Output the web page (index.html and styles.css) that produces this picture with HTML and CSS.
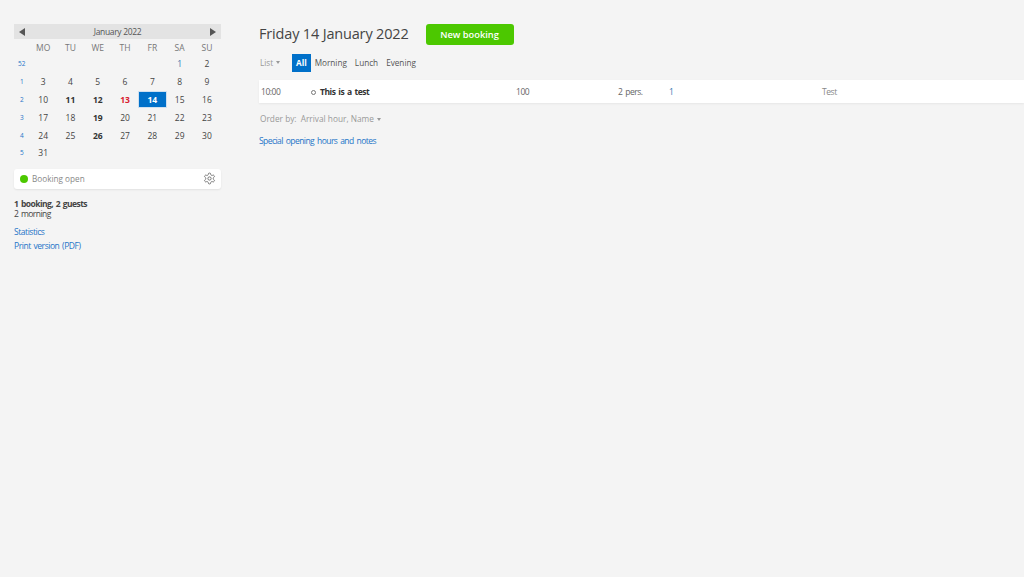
FILE: index.html
```html
<!DOCTYPE html>
<html lang="en">
<head>
    <meta charset="UTF-8">
    <title>Bookings</title>
    <link rel="stylesheet" href="styles.css">
</head>
<body>
    <div class="sidebar">
        <div class="cal-head">
            <span class="arrow-left"></span>
            <span>January 2022</span>
            <span class="arrow-right"></span>
        </div>
        <div class="cal-grid">
            <span></span><span class="dow">MO</span><span class="dow">TU</span><span class="dow">WE</span><span class="dow">TH</span><span class="dow">FR</span><span class="dow">SA</span><span class="dow">SU</span>

            <a class="wk">52</a><span></span><span></span><span></span><span></span><span></span><span class="blue">1</span><span>2</span>
            <a class="wk">1</a><span>3</span><span>4</span><span>5</span><span>6</span><span>7</span><span>8</span><span>9</span>
            <a class="wk">2</a><span>10</span><span class="bold">11</span><span class="bold">12</span><span class="bold red">13</span><span class="today">14</span><span>15</span><span>16</span>
            <a class="wk">3</a><span>17</span><span>18</span><span class="bold">19</span><span>20</span><span>21</span><span>22</span><span>23</span>
            <a class="wk">4</a><span>24</span><span>25</span><span class="bold">26</span><span>27</span><span>28</span><span>29</span><span>30</span>
            <a class="wk">5</a><span>31</span>
        </div>

        <div class="status-box">
            <span class="dot"></span>
            <span class="status-text">Booking open</span>
            <svg class="gear" width="13" height="13" viewBox="0 0 24 24" fill="none" stroke="#666" stroke-width="1.6" stroke-linejoin="round">
                <circle cx="12" cy="12" r="3"/>
                <path d="M12.22 2h-.44a2 2 0 0 0-2 2v.18a2 2 0 0 1-1 1.73l-.43.25a2 2 0 0 1-2 0l-.15-.08a2 2 0 0 0-2.73.73l-.22.38a2 2 0 0 0 .73 2.73l.15.1a2 2 0 0 1 1 1.72v.51a2 2 0 0 1-1 1.74l-.15.09a2 2 0 0 0-.73 2.73l.22.38a2 2 0 0 0 2.73.73l.15-.08a2 2 0 0 1 2 0l.43.25a2 2 0 0 1 1 1.73V20a2 2 0 0 0 2 2h.44a2 2 0 0 0 2-2v-.18a2 2 0 0 1 1-1.73l.43-.25a2 2 0 0 1 2 0l.15.08a2 2 0 0 0 2.73-.73l.22-.39a2 2 0 0 0-.73-2.73l-.15-.08a2 2 0 0 1-1-1.74v-.5a2 2 0 0 1 1-1.74l.15-.09a2 2 0 0 0 .73-2.73l-.22-.38a2 2 0 0 0-2.73-.73l-.15.08a2 2 0 0 1-2 0l-.43-.25a2 2 0 0 1-1-1.73V4a2 2 0 0 0-2-2z"/>
            </svg>
        </div>

        <p class="summary"><b>1 booking, 2 guests</b><br>2 morning</p>
        <a class="side-link first">Statistics</a>
        <a class="side-link">Print version (PDF)</a>
    </div>

    <div class="main">
        <div class="title-row">
            <h1>Friday 14 January 2022</h1>
            <button class="new-btn">New booking</button>
        </div>
        <div class="tabs">
            <span class="list-menu">List <i class="caret"></i></span>
            <span class="tab active">All</span>
            <span class="tab">Morning</span>
            <span class="tab">Lunch</span>
            <span class="tab">Evening</span>
        </div>
        <div class="booking-row">
            <span class="col-time">10:00</span>
            <span class="col-name"><i class="ring"></i><b>This is a test</b></span>
            <span class="col-num">100</span>
            <span class="col-pers">2 pers.</span>
            <span class="col-one">1</span>
            <span class="col-note">Test</span>
        </div>
        <div class="order">Order by: <span class="order-val">Arrival hour, Name <i class="caret"></i></span></div>
        <a class="special">Special opening hours and notes</a>
    </div>
</body>
</html>
```

FILE: styles.css
```css
* {
    margin: 0;
    padding: 0;
    box-sizing: border-box;
}

body {
    background-color: #f4f4f4;
    font-family: "Open Sans", sans-serif;
    font-size: 8.2px;
    color: #333;
    display: flex;
    height: 577px;
    overflow: hidden;
}

a {
    color: #1f74c8;
}

/* Sidebar */
.sidebar {
    width: 207px;
    margin: 24px 0 0 14px;
    flex-shrink: 0;
}

.cal-head {
    height: 15px;
    background: #e3e3e3;
    display: flex;
    align-items: center;
    justify-content: space-between;
    padding: 0 5px;
    color: #555;
    font-size: 8.5px;
    letter-spacing: -0.33px;
}

.arrow-left,
.arrow-right {
    width: 0;
    height: 0;
    border-top: 4px solid transparent;
    border-bottom: 4px solid transparent;
}

.arrow-left {
    border-right: 6px solid #555;
}

.arrow-right {
    border-left: 6px solid #555;
}

.cal-grid {
    display: grid;
    grid-template-columns: 15.5px repeat(7, 27.3px);
    grid-template-rows: 15px;
    grid-auto-rows: 17.8px;
    justify-items: center;
    align-items: center;
    margin-top: 1px;
    font-size: 8.5px;
    color: #444;
}

.cal-grid > span {
    width: 100%;
    height: 100%;
    display: flex;
    align-items: center;
    justify-content: center;
}

.cal-grid .dow {
    color: #777;
}

.cal-grid .wk {
    font-size: 6.5px;
    justify-self: center;
}

.cal-grid .blue {
    color: #3a7ab0;
}

.cal-grid .bold {
    font-weight: 700;
    color: #333;
}

.cal-grid .red {
    color: #d8202f;
}

.cal-grid > .today {
    width: 29px;
    background: #0070c9;
    color: #fff;
    font-weight: 700;
    border: 1px solid #cfe0f0;
}

.status-box {
    height: 20px;
    margin-top: 7px;
    background: #fff;
    border-radius: 3px;
    box-shadow: 0 1px 2px rgba(0, 0, 0, 0.08);
    display: flex;
    align-items: center;
    padding: 0 5px 0 6px;
}

.dot {
    width: 8px;
    height: 8px;
    border-radius: 50%;
    background: #4cc800;
    margin-right: 4px;
}

.status-text {
    color: #888;
    flex: 1;
}

.summary {
    margin-top: 10px;
    font-size: 8.5px;
    letter-spacing: -0.55px;
    word-spacing: 1px;
    line-height: 10px;
    color: #444;
}

.side-link {
    display: block;
    margin-top: 3px;
    font-size: 8.5px;
    letter-spacing: -0.45px;
    word-spacing: 1px;
    line-height: 11px;
}

.side-link.first {
    margin-top: 7px;
}

/* Main */
.main {
    flex: 1;
    margin: 24px 0 0 38px;
    min-width: 0;
}

.title-row {
    display: flex;
    align-items: center;
    height: 21px;
}

h1 {
    font-size: 14.5px;
    letter-spacing: -0.17px;
    font-weight: 400;
    color: #444;
    margin-bottom: 3px;
}

.new-btn {
    margin-left: 17px;
    width: 88px;
    height: 21px;
    background: #4cc800;
    border: none;
    border-radius: 3px;
    color: #fff;
    font-family: inherit;
    font-size: 9.3px;
    font-weight: 600;
}

.tabs {
    display: flex;
    align-items: center;
    height: 18px;
    margin-top: 9px;
}

.list-menu {
    display: flex;
    align-items: center;
    gap: 2px;
    color: #999;
    width: 33px;
    padding-left: 1px;
    margin-bottom: 1px;
}

.caret {
    display: inline-block;
    width: 0;
    height: 0;
    border-left: 2.5px solid transparent;
    border-right: 2.5px solid transparent;
    border-top: 3px solid #999;
    vertical-align: middle;
    margin-left: 1px;
}

.tab {
    padding: 0 4px;
    line-height: 18px;
    color: #555;
}

.tab.active {
    background: #0070c9;
    color: #fff;
    font-weight: 700;
    padding: 0 4px;
}

.booking-row {
    display: flex;
    align-items: center;
    height: 23px;
    margin-top: 8px;
    padding-bottom: 1px;
    background: #fff;
    box-shadow: 0 1px 2px rgba(0, 0, 0, 0.06);
    color: #666;
    font-size: 8.5px;
    letter-spacing: -0.45px;
    word-spacing: 1px;
}

.booking-row span {
    flex-shrink: 0;
}

.col-time {
    width: 52px;
    padding-left: 2px;
}

.col-name {
    width: 205px;
    color: #333;
}

.ring {
    display: inline-block;
    width: 5px;
    height: 5px;
    border: 1px solid #777;
    border-radius: 50%;
    margin-right: 4px;
}

.col-num {
    width: 102px;
}

.col-pers {
    width: 51px;
}

.col-one {
    width: 153px;
    color: #3a7ab0;
}

.col-note {
    color: #888;
}

.order {
    margin-top: 10px;
    padding-left: 1px;
    font-size: 8.3px;
    color: #999;
    line-height: 12px;
}

.order-val {
    margin-left: 2px;
}

.special {
    display: block;
    margin-top: 10px;
    line-height: 12px;
    font-size: 8.5px;
    letter-spacing: -0.55px;
    word-spacing: 1.2px;
}
```
